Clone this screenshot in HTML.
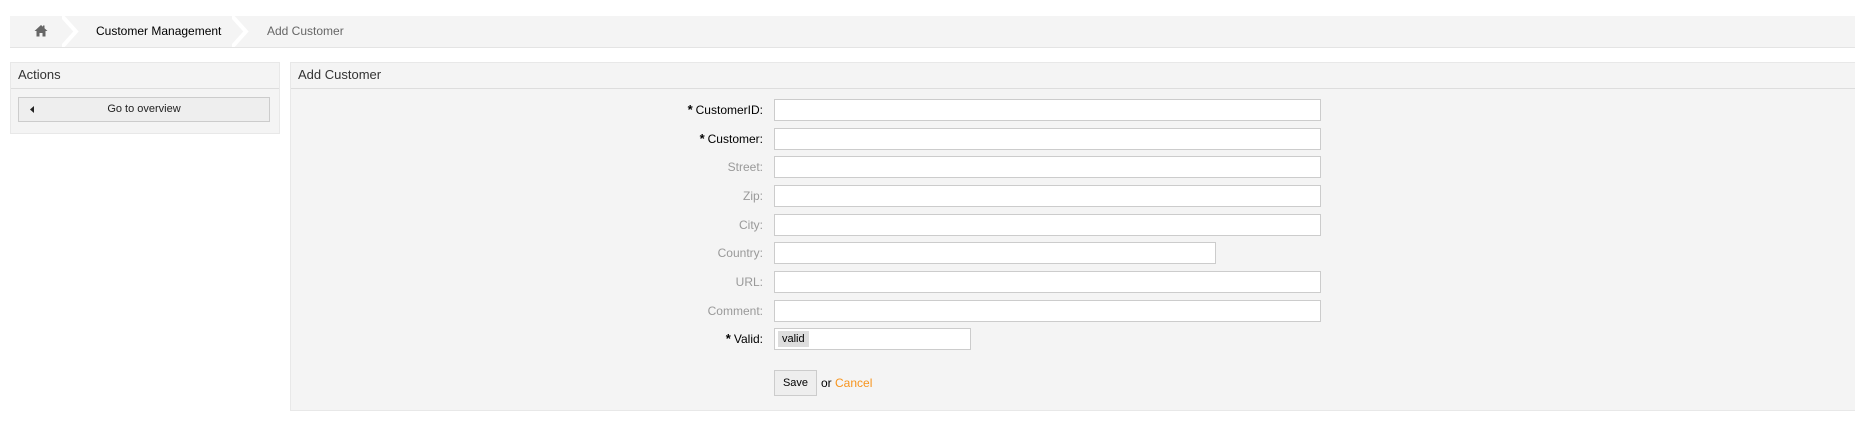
<!DOCTYPE html>
<html><head><style>
body{margin:0;background:#fff;font-family:"Liberation Sans",Arial,sans-serif;font-size:12px;color:#000;width:1855px;height:432px;position:relative;overflow:hidden}
.bc{position:absolute;left:10px;top:16px;width:1845px;height:31px;background:#f4f4f4;border-bottom:1px solid #e4e4e4}
.chev{position:absolute;top:0;width:20px;height:31px}
.abs{position:absolute}
.box{position:absolute;background:#f4f4f4;border:1px solid #e8e8e8}
.hdr{height:25px;border-bottom:1px solid #ddd;color:#333;font-size:13px;line-height:24px;padding-left:7px}
.lbl{position:absolute;right:1092px;text-align:right;color:#999;font-size:12px;line-height:22px}
.lbl.r{color:#000}
.st{font-weight:bold;font-size:13px;margin-right:3px}
.inp{position:absolute;left:774px;width:545px;height:20px;background:#fff;border:1px solid #ccc}
</style></head><body>
<div class="bc">
  <svg class="abs" style="left:24px;top:8px" width="14" height="13" viewBox="0 0 14 13"><path d="M7 1L0.5 7H2.5V12.5H5.5V9H8.5V12.5H11.5V7H13.5L10.5 4.2V1.5H9V2.8Z" fill="#666"/></svg>
  <svg class="chev" style="left:52px" viewBox="0 0 20 31"><path d="M0 0L14 15.5L0 31" fill="none" stroke="#fff" stroke-width="4"/></svg>
  <div class="abs" style="left:86px;top:0;line-height:31px;color:#000">Customer Management</div>
  <svg class="chev" style="left:222px" viewBox="0 0 20 31"><path d="M0 0L14 15.5L0 31" fill="none" stroke="#fff" stroke-width="4"/></svg>
  <div class="abs" style="left:257px;top:0;line-height:31px;color:#666">Add Customer</div>
</div>
<div class="box" style="left:10px;top:62px;width:268px;height:70px">
  <div class="hdr">Actions</div>
  <div class="abs" style="left:7px;top:34px;width:250px;height:23px;background:#eee;border:1px solid #ccc;text-align:center;line-height:23px;font-size:11px;color:#222">Go to overview
    <svg class="abs" style="left:11px;top:8px" width="4" height="7"><path d="M4 0V7L0 3.5Z" fill="#222"/></svg></div>
</div>
<div class="box" style="left:290px;top:62px;width:1570px;height:347px">
  <div class="hdr">Add Customer</div>
</div>
<div class="lbl r" style="top:99px"><span class="st">*</span>CustomerID:</div><div class="inp" style="top:99px"></div>
<div class="lbl r" style="top:128px"><span class="st">*</span>Customer:</div><div class="inp" style="top:128px"></div>
<div class="lbl" style="top:156px">Street:</div><div class="inp" style="top:156px"></div>
<div class="lbl" style="top:185px">Zip:</div><div class="inp" style="top:185px"></div>
<div class="lbl" style="top:214px">City:</div><div class="inp" style="top:214px"></div>
<div class="lbl" style="top:242px">Country:</div><div class="inp" style="top:242px;width:440px"></div>
<div class="lbl" style="top:271px">URL:</div><div class="inp" style="top:271px"></div>
<div class="lbl" style="top:300px">Comment:</div><div class="inp" style="top:300px"></div>
<div class="lbl r" style="top:328px"><span class="st">*</span>Valid:</div><div class="inp" style="top:328px;width:195px"><span class="abs" style="left:3px;top:2px;height:16px;padding:0 4px;background:#ddd;line-height:16px;font-size:11px">valid</span></div>
<div class="abs" style="left:774px;top:370px;width:41px;height:24px;background:#eee;border:1px solid #ccc;text-align:center;line-height:24px;font-size:11px">Save</div>
<div class="abs" style="left:821px;top:370px;line-height:26px">or <span style="color:#f7941d">Cancel</span></div>
</body></html>
